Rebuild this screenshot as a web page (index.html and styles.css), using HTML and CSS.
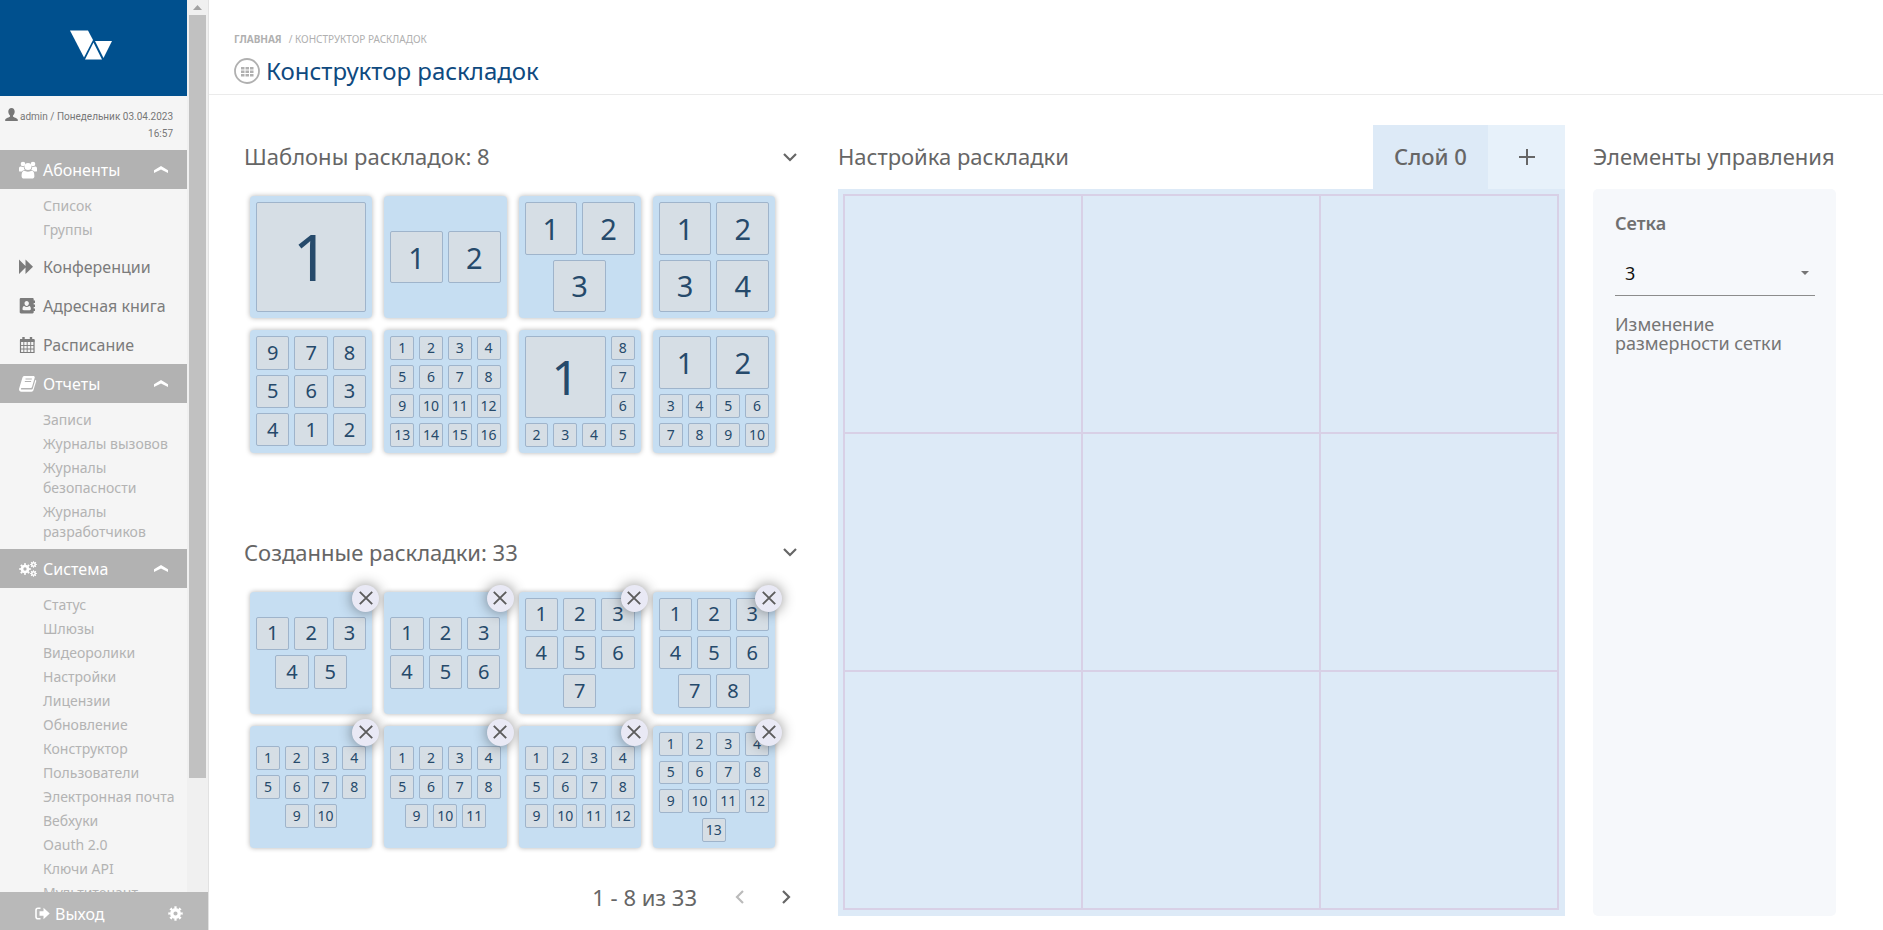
FILE: index.html
```
<!DOCTYPE html>
<html lang="ru">
<head>
    <meta charset="UTF-8">
    <meta name="viewport" content="width=device-width, initial-scale=1.0">
    <title>Конструктор раскладок</title>
    <link rel="stylesheet" href="styles.css">
</head>
<body>
    <!-- Shared icons -->
    <svg class="sprite" aria-hidden="true">
        <symbol id="i-up" viewBox="0 0 14 7"><path d="M0 4.2 7 0l7 4.200v2.800L7 3.600 0 7z" fill="currentColor"/></symbol>
        <symbol id="i-down" viewBox="0 0 14 9"><path d="M1 1l6 6 6-6" fill="none" stroke="currentColor" stroke-width="2.2"/></symbol>
        <symbol id="i-close" viewBox="0 0 14 14"><path d="M.8.8l12.4 12.4M13.2.8.8 13.2" fill="none" stroke="currentColor" stroke-width="1.9"/></symbol>
        <symbol id="i-gear" viewBox="0 0 16 16">
            <circle cx="8" cy="8" r="4" fill="none" stroke="currentColor" stroke-width="3.6"/>
            <circle cx="8" cy="8" r="6.4" fill="none" stroke="currentColor" stroke-width="2.6" pathLength="16" stroke-dasharray="1 1" stroke-dashoffset="0.5"/>
        </symbol>
    </svg>

    <div class="page">
        <aside class="sidebar">
            <div class="sidebar-scroll">
                <div class="sidebar-content">
                    <a href="#" class="logo" aria-label="На главную">
                        <svg width="42" height="30" viewBox="0 0 42 30">
                            <path d="M0 .5h18l5 9.500-9 17.500z" fill="#fff"/>
                            <path d="M25 11h17l-8.500 17z" fill="#fff"/>
                            <path d="M23.500 12.500 32 29.500H15z" fill="#fff"/>
                        </svg>
                    </a>
                    <div class="user-info">
                        <svg width="13" height="13" viewBox="0 0 13 13"><path d="M6.500 0c2 0 3.200 1.500 3.200 3.600 0 1.700-.7 3.200-1.700 4v.8c0 .8 4.800 1.400 4.800 3.400V13H.2v-1.200c0-2 4.800-2.600 4.800-3.400v-.8c-1-.8-1.700-2.300-1.700-4C3.300 1.500 4.500 0 6.500 0z" fill="currentColor"/></svg>
                        admin / Понедельник 03.04.2023 16:57
                    </div>
                    <nav>
                        <button type="button" class="menu-item group">
                            <svg class="menu-icon" viewBox="0 0 18 18" fill="currentColor"><circle cx="4" cy="3" r="2.300"/><circle cx="14" cy="3" r="2.300"/><circle cx="9" cy="5.500" r="3.500"/><path d="M0 10V7.500C0 6 .8 5.200 2 5.500c1 .5 1.800.5 2.800.2 0 1.500.4 2.500 1.200 3.300-1.300 0-2.300.5-3 1.500H1C.4 10.500 0 10.400 0 10zM18 10V7.500c0-1.500-.8-2.300-2-2-1 .5-1.800.5-2.800.2 0 1.500-.4 2.500-1.200 3.300 1.300 0 2.300.5 3 1.500h2c.6 0 1-.1 1-.5z"/><path d="M2.600 15.200c0-3 .7-5.400 2.700-5.400 1 0 1.600 1 3.700 1s2.700-1 3.700-1c2 0 2.700 2.400 2.700 5.400 0 1.600-1 2.300-2.300 2.300H4.900c-1.300 0-2.300-.7-2.300-2.300z"/></svg>
                            <span>Абоненты</span>
                            <svg class="arrow"><use href="#i-up"/></svg>
                        </button>
                        <ul class="submenu">
                            <li><a href="#">Список</a></li>
                            <li><a href="#">Группы</a></li>
                        </ul>
                        <a href="#" class="menu-item">
                            <svg class="menu-icon" viewBox="0 0 18 18" fill="currentColor"><path d="M0 1.500 6.500 8V1.500L14 8.800l-7.500 7.300V9.600L0 16.100z"/></svg>
                            <span>Конференции</span>
                        </a>
                        <a href="#" class="menu-item">
                            <svg class="menu-icon" viewBox="0 0 18 18" fill="currentColor"><path fill-rule="evenodd" d="M2 1h11.500c.7 0 1.200.5 1.200 1.200v1.300H16v2.500h-1.300v1.500H16V10h-1.300v1.500H16V14h-1.300v1.300c0 .7-.5 1.200-1.200 1.200H2c-.7 0-1.300-.5-1.300-1.200V2.200C.7 1.500 1.300 1 2 1zm5.700 3C6.300 4 5.500 5 5.500 6.300S6.300 9 7.700 9s2.200-1.400 2.200-2.700S9.100 4 7.700 4zM5.200 9C4 9.200 3.500 10.500 3.500 12c0 .8.500 1.200 1.200 1.200h6c.7 0 1.200-.4 1.200-1.200 0-1.500-.5-2.800-1.700-3-.7.600-1.500 1-2.500 1S5.900 9.600 5.200 9z"/></svg>
                            <span>Адресная книга</span>
                        </a>
                        <a href="#" class="menu-item">
                            <svg class="menu-icon" viewBox="0 0 18 18"><path d="M1.500 4.500h13.500v12H1.500z" fill="none" stroke="currentColor" stroke-width="1.200"/><path d="M1 3h14.500v3H1z" fill="currentColor"/><path d="M4.500 1v4M12 1v4" stroke="currentColor" stroke-width="2.400"/><path d="M1 9.500h14M1 13h14M4.800 6v10M8.200 6v10M11.700 6v10" stroke="currentColor" stroke-width=".9"/></svg>
                            <span>Расписание</span>
                        </a>
                        <button type="button" class="menu-item group">
                            <svg class="menu-icon" viewBox="0 0 18 18"><path d="M5.500 1h8.800c1 0 1.700.8 1.400 1.800l-2.600 9c-.2.800-.8 1.200-1.500 1.200H3c-1.300 0-1.600 1.600-.3 1.600h9.700c.8 0 1.200-.4 1.400-1l2.600-8.900c1 .4.900 1.200.7 1.900l-2.600 8.500c-.3 1-1 1.600-2 1.600H2.300C.5 16.700-.4 15 .2 13.300L3.400 2.700C3.700 1.700 4.500 1 5.500 1z" fill="currentColor"/><path d="M6.500 4h6.300M5.800 6.500h6.300" stroke="#b2b2b2"/></svg>
                            <span>Отчеты</span>
                            <svg class="arrow"><use href="#i-up"/></svg>
                        </button>
                        <ul class="submenu">
                            <li><a href="#">Записи</a></li>
                            <li><a href="#">Журналы вызовов</a></li>
                            <li><a href="#">Журналы безопасности</a></li>
                            <li><a href="#">Журналы разработчиков</a></li>
                        </ul>
                        <button type="button" class="menu-item group">
                            <svg class="menu-icon" viewBox="0 0 18 18"><use href="#i-gear" x="0" y="3" width="12" height="12"/><use href="#i-gear" x="11" y="1" width="7" height="7"/><use href="#i-gear" x="11" y="10" width="7" height="7"/></svg>
                            <span>Система</span>
                            <svg class="arrow"><use href="#i-up"/></svg>
                        </button>
                        <ul class="submenu">
                            <li><a href="#">Статус</a></li>
                            <li><a href="#">Шлюзы</a></li>
                            <li><a href="#">Видеоролики</a></li>
                            <li><a href="#">Настройки</a></li>
                            <li><a href="#">Лицензии</a></li>
                            <li><a href="#">Обновление</a></li>
                            <li><a href="#">Конструктор</a></li>
                            <li><a href="#">Пользователи</a></li>
                            <li><a href="#">Электронная почта</a></li>
                            <li><a href="#">Вебхуки</a></li>
                            <li><a href="#">Oauth 2.0</a></li>
                            <li><a href="#">Ключи API</a></li>
                            <li><a href="#">Мультитенант</a></li>
                        </ul>
                    </nav>
                </div>
                <div class="scrollbar">
                    <svg width="9" height="5" viewBox="0 0 9 5"><path d="M4.500 0 9 5H0z" fill="#a3a3a3"/></svg>
                    <div class="scroll-thumb"></div>
                </div>
            </div>
            <div class="sidebar-footer">
                <a href="#" class="logout">
                    <svg width="15" height="13" viewBox="0 0 15 13"><path d="M5.500 1.200H3C1.800 1.200 1 2 1 3.200v6.600c0 1.200.8 2 2 2h2.500" fill="none" stroke="currentColor" stroke-width="1.600"/><path d="M4.500 4.200h4V.8L14.700 6.500 8.500 12.200V8.800h-4z" fill="currentColor"/></svg>
                    Выход
                </a>
                <button type="button" class="settings" aria-label="Настройки"><svg width="15" height="15"><use href="#i-gear"/></svg></button>
            </div>
        </aside>

        <main class="main">
            <header class="page-header">
                <div class="breadcrumbs"><a href="#">Главная</a><span>/ Конструктор раскладок</span></div>
                <h1>
                    <svg width="26" height="26" viewBox="0 0 26 26"><circle cx="13" cy="13" r="12" fill="none" stroke="#b0b0b0" stroke-width="1.800"/><path d="M7 9h3.500v2.500H7zm4.500 0H15v2.500h-3.500zM16 9h3.500v2.500H16zm-9 3.500h3.500V15H7zm4.500 0H15V15h-3.500zm4.500 0h3.500V15H16zM7 16h3.500v2.500H7zm4.500 0H15v2.500h-3.500zm4.500 0h3.500v2.500H16z" fill="#b0b0b0"/></svg>
                    Конструктор раскладок
                </h1>
            </header>

            <div class="workspace">
                <section class="layouts">
                    <div class="section-header">
                        <h2>Шаблоны раскладок: 8</h2>
                        <button type="button" class="toggle" aria-label="Свернуть шаблоны"><svg width="14" height="9"><use href="#i-down"/></svg></button>
                    </div>
                    <div class="cards">
                        <button type="button" class="card n1"><i>1</i></button>
                        <button type="button" class="card n2"><i>1</i><i>2</i></button>
                        <button type="button" class="card n2"><i>1</i><i>2</i><i>3</i></button>
                        <button type="button" class="card n2"><i>1</i><i>2</i><i>3</i><i>4</i></button>
                        <button type="button" class="card n3"><i>9</i><i>7</i><i>8</i><i>5</i><i>6</i><i>3</i><i>4</i><i>1</i><i>2</i></button>
                        <button type="button" class="card n4"><i>1</i><i>2</i><i>3</i><i>4</i><i>5</i><i>6</i><i>7</i><i>8</i><i>9</i><i>10</i><i>11</i><i>12</i><i>13</i><i>14</i><i>15</i><i>16</i></button>
                        <button type="button" class="card mixed"><i class="span3">1</i><i>8</i><i>7</i><i>6</i><i>2</i><i>3</i><i>4</i><i>5</i></button>
                        <button type="button" class="card mixed"><i class="span2">1</i><i class="span2">2</i><i>3</i><i>4</i><i>5</i><i>6</i><i>7</i><i>8</i><i>9</i><i>10</i></button>
                    </div>

                    <div class="section-header created">
                        <h2>Созданные раскладки: 33</h2>
                        <button type="button" class="toggle" aria-label="Свернуть созданные"><svg width="14" height="9"><use href="#i-down"/></svg></button>
                    </div>
                    <div class="cards">
                        <div class="card-wrap">
                            <button type="button" class="card n3"><i>1</i><i>2</i><i>3</i><i>4</i><i>5</i></button>
                            <button type="button" class="remove" aria-label="Удалить"><svg width="14" height="14"><use href="#i-close"/></svg></button>
                        </div>
                        <div class="card-wrap">
                            <button type="button" class="card n3"><i>1</i><i>2</i><i>3</i><i>4</i><i>5</i><i>6</i></button>
                            <button type="button" class="remove" aria-label="Удалить"><svg width="14" height="14"><use href="#i-close"/></svg></button>
                        </div>
                        <div class="card-wrap">
                            <button type="button" class="card n3"><i>1</i><i>2</i><i>3</i><i>4</i><i>5</i><i>6</i><i>7</i></button>
                            <button type="button" class="remove" aria-label="Удалить"><svg width="14" height="14"><use href="#i-close"/></svg></button>
                        </div>
                        <div class="card-wrap">
                            <button type="button" class="card n3"><i>1</i><i>2</i><i>3</i><i>4</i><i>5</i><i>6</i><i>7</i><i>8</i></button>
                            <button type="button" class="remove" aria-label="Удалить"><svg width="14" height="14"><use href="#i-close"/></svg></button>
                        </div>
                        <div class="card-wrap">
                            <button type="button" class="card n4"><i>1</i><i>2</i><i>3</i><i>4</i><i>5</i><i>6</i><i>7</i><i>8</i><i>9</i><i>10</i></button>
                            <button type="button" class="remove" aria-label="Удалить"><svg width="14" height="14"><use href="#i-close"/></svg></button>
                        </div>
                        <div class="card-wrap">
                            <button type="button" class="card n4"><i>1</i><i>2</i><i>3</i><i>4</i><i>5</i><i>6</i><i>7</i><i>8</i><i>9</i><i>10</i><i>11</i></button>
                            <button type="button" class="remove" aria-label="Удалить"><svg width="14" height="14"><use href="#i-close"/></svg></button>
                        </div>
                        <div class="card-wrap">
                            <button type="button" class="card n4"><i>1</i><i>2</i><i>3</i><i>4</i><i>5</i><i>6</i><i>7</i><i>8</i><i>9</i><i>10</i><i>11</i><i>12</i></button>
                            <button type="button" class="remove" aria-label="Удалить"><svg width="14" height="14"><use href="#i-close"/></svg></button>
                        </div>
                        <div class="card-wrap">
                            <button type="button" class="card n4"><i>1</i><i>2</i><i>3</i><i>4</i><i>5</i><i>6</i><i>7</i><i>8</i><i>9</i><i>10</i><i>11</i><i>12</i><i>13</i></button>
                            <button type="button" class="remove" aria-label="Удалить"><svg width="14" height="14"><use href="#i-close"/></svg></button>
                        </div>
                    </div>
                    <div class="pager">
                        <span>1 - 8 из 33</span>
                        <button type="button" disabled aria-label="Назад"><svg width="9" height="14" viewBox="0 0 9 14"><path d="M8 1 2 7l6 6" fill="none" stroke="currentColor" stroke-width="2.200"/></svg></button>
                        <button type="button" aria-label="Вперед"><svg width="9" height="14" viewBox="0 0 9 14"><path d="M1 1l6 6-6 6" fill="none" stroke="currentColor" stroke-width="2.200"/></svg></button>
                    </div>
                </section>

                <section class="editor">
                    <div class="section-header">
                        <h2>Настройка раскладки</h2>
                        <div class="tabs">
                            <button type="button" class="tab active">Слой 0</button>
                            <button type="button" class="tab add" aria-label="Добавить слой"><svg width="16" height="16" viewBox="0 0 16 16"><path d="M8 0v16M0 8h16" stroke="currentColor" stroke-width="2"/></svg></button>
                        </div>
                    </div>
                    <div class="canvas">
                        <div class="canvas-grid">
                            <div></div><div></div><div></div>
                            <div></div><div></div><div></div>
                            <div></div><div></div><div></div>
                        </div>
                    </div>
                </section>

                <section class="controls">
                    <div class="section-header">
                        <h2>Элементы управления</h2>
                    </div>
                    <div class="control-panel">
                        <label for="gridSize">Сетка</label>
                        <div class="select-box">
                            <select id="gridSize">
                                <option>1</option>
                                <option>2</option>
                                <option selected>3</option>
                                <option>4</option>
                            </select>
                            <svg width="8" height="4" viewBox="0 0 8 4"><path d="M0 0h8L4 4z" fill="#757575"/></svg>
                        </div>
                        <p>Изменение размерности сетки</p>
                    </div>
                </section>
            </div>
        </main>
    </div>
</body>
</html>
```
FILE: styles.css
```
* {
    box-sizing: border-box;
}

body {
    margin: 0;
    font-family: "Noto Sans", "Open Sans", sans-serif;
    font-size: 14px;
    color: #666;
    background-color: #fff;
}

button {
    padding: 0;
    border: none;
    background: none;
    font-family: inherit;
    color: inherit;
    cursor: pointer;
}

a {
    color: inherit;
    text-decoration: none;
}

svg {
    flex: none;
}

.sprite {
    display: none;
}

.page {
    display: flex;
    height: 100vh;
}

/* Sidebar */
.sidebar {
    display: flex;
    flex-direction: column;
    flex: none;
    width: 209px;
    border-right: 1px solid #e2e2e2;
    background-color: #f5f5f5;
}

.sidebar-scroll {
    display: flex;
    flex: 1;
    min-height: 0;
    overflow: hidden;
}

.sidebar-content {
    flex: 1;
}

.logo {
    display: flex;
    justify-content: center;
    align-items: center;
    height: 96px;
    padding: 0 15px 6px 10px;
    background-color: #00508e;
}

.user-info {
    padding: 12px 14px 8px 0;
    font-family: Roboto, sans-serif;
    font-size: 10px;
    line-height: 17px;
    text-align: right;
    color: #777;
}

.user-info svg {
    vertical-align: -1px;
}

.menu-item {
    display: flex;
    align-items: center;
    width: 100%;
    height: 39px;
    padding: 0 19px;
    font-size: 16px;
    color: #7c7c7c;
}

.menu-item span {
    flex: 1;
    text-align: left;
}

.menu-item.group {
    background-color: #b2b2b2;
    color: #fff;
}

.menu-icon {
    width: 18px;
    height: 18px;
    margin-right: 6px;
}

.arrow {
    width: 14px;
    height: 7px;
}

.submenu {
    margin: 0;
    padding: 5px 5px 5px 43px;
    list-style: none;
    font-size: 14px;
    line-height: 20px;
    color: #b3b3b3;
}

.submenu a {
    display: block;
    padding: 2px 0;
}

.scrollbar {
    display: flex;
    flex-direction: column;
    align-items: center;
    gap: 5px;
    width: 21px;
    padding: 5px 2px 0;
    background-color: #f0f0f0;
}

.scroll-thumb {
    width: 17px;
    height: 86%;
    background-color: #c1c1c1;
}

.sidebar-footer {
    display: flex;
    justify-content: space-between;
    align-items: center;
    height: 38px;
    padding: 5px 25px 0 35px;
    background-color: #b9b9b9;
    color: #fff;
}

.logout {
    display: flex;
    align-items: center;
    gap: 5px;
    font-size: 16px;
}

.settings {
    display: flex;
}

/* Main area */
.main {
    flex: 1;
    min-width: 0;
}

.page-header {
    height: 95px;
    padding: 32px 25px 0;
    border-bottom: 1px solid #ebebeb;
}

.breadcrumbs {
    display: flex;
    gap: 7px;
    font-size: 10px;
    line-height: 14px;
    text-transform: uppercase;
    color: #b0b0b0;
}

.breadcrumbs a {
    font-weight: bold;
}

h1 {
    display: flex;
    align-items: center;
    gap: 6px;
    margin: 9px 0 0;
    font-size: 24px;
    line-height: 32px;
    font-weight: 400;
    color: #0f4a80;
}

h2 {
    margin: 0;
    font-size: 22px;
    font-weight: 400;
    white-space: nowrap;
}

.workspace {
    display: grid;
    grid-template-columns: 566fr 727fr 243fr;
    gap: 28px;
    padding: 30px 47px 14px 35px;
}

.workspace section {
    min-width: 0;
}

.section-header {
    display: flex;
    justify-content: space-between;
    align-items: center;
    height: 64px;
}

.section-header h2 {
    padding-bottom: 2px;
}

.toggle {
    display: flex;
    margin-right: 13px;
}

/* Layout cards */
.cards {
    display: grid;
    grid-template-columns: repeat(4, 1fr);
    gap: 12px;
    margin: 7px 35px 0 6px;
}

.section-header.created {
    margin-top: 68px;
}

.card-wrap {
    position: relative;
}

.card {
    display: flex;
    flex-wrap: wrap;
    justify-content: center;
    align-content: center;
    gap: 5px;
    width: 100%;
    aspect-ratio: 1;
    padding: 6px;
    border-radius: 4px;
    background-color: #c6def2;
    box-shadow: 0 0 5px rgba(0, 0, 0, 0.3);
    color: #264a6b;
}

.card i {
    display: flex;
    justify-content: center;
    align-items: center;
    aspect-ratio: 1;
    border: 1px solid #9fb4cb;
    border-radius: 2px;
    background-color: #d6dee5;
    font-style: normal;
    line-height: 1;
}

.n1 i {
    width: 100%;
    font-size: 64px;
}

.n2 i {
    width: calc((100% - 5px) / 2);
    font-size: 29px;
}

.n3 i {
    width: calc((100% - 10px) / 3);
    font-size: 20px;
}

.n4 i {
    width: calc((100% - 15px) / 4);
    font-size: 14px;
}

/* Cards with tiles of different sizes */
.mixed {
    display: grid;
    grid-template-columns: repeat(4, 1fr);
    justify-content: stretch;
}

.mixed i {
    font-size: 14px;
}

.mixed .span2 {
    grid-column: span 2;
    grid-row: span 2;
    font-size: 29px;
}

.mixed .span3 {
    grid-column: span 3;
    grid-row: span 3;
    font-size: 48px;
}

.remove {
    position: absolute;
    top: -7px;
    right: -7px;
    display: flex;
    justify-content: center;
    align-items: center;
    width: 27px;
    height: 27px;
    border-radius: 50%;
    background-color: #e9e9f5;
    box-shadow: 0 0 14px rgba(0, 0, 0, 0.45);
    color: #5c5c5c;
}

.pager {
    display: flex;
    justify-content: flex-end;
    align-items: center;
    gap: 38px;
    margin-top: 33px;
    padding-right: 19px;
    font-size: 22px;
    line-height: 32px;
}

.pager button {
    display: flex;
}

.pager button:disabled {
    color: #bbb;
    cursor: default;
}

/* Editor */
.tabs {
    display: flex;
    height: 100%;
}

.tab {
    display: flex;
    justify-content: center;
    align-items: center;
    width: 77px;
    background-color: #e7f1fa;
}

.tab.active {
    width: 115px;
    padding-bottom: 3px;
    background-color: #ddeaf7;
    font-size: 22px;
    font-weight: 500;
}

.canvas {
    aspect-ratio: 1;
    padding: 5px 6px 6px 5px;
    background-color: #ddeaf7;
}

.canvas-grid {
    display: grid;
    grid-template-columns: repeat(3, 1fr);
    grid-template-rows: repeat(3, 1fr);
    gap: 2px;
    height: 100%;
    padding: 2px;
    background-color: #d8d0e6;
}

.canvas-grid div {
    background-color: #ddeaf7;
}

/* Controls */
.controls {
    display: flex;
    flex-direction: column;
}

.control-panel {
    flex: 1;
    padding: 22px 21px 0 22px;
    border-radius: 5px;
    background-color: #f6f8fb;
}

.control-panel label {
    display: block;
    font-size: 18px;
    line-height: 24px;
    font-weight: 600;
    color: #707070;
}

.select-box {
    display: flex;
    align-items: center;
    margin-top: 16px;
    padding-right: 6px;
    border-bottom: 1px solid #8c8c8c;
}

.select-box select {
    flex: 1;
    height: 44px;
    padding: 0 10px;
    border: none;
    outline: none;
    appearance: none;
    background: none;
    font-family: inherit;
    font-size: 18px;
    color: #111;
}

.control-panel p {
    margin: 19px 0 0;
    font-size: 18px;
    line-height: 19px;
    color: #757575;
}
```
